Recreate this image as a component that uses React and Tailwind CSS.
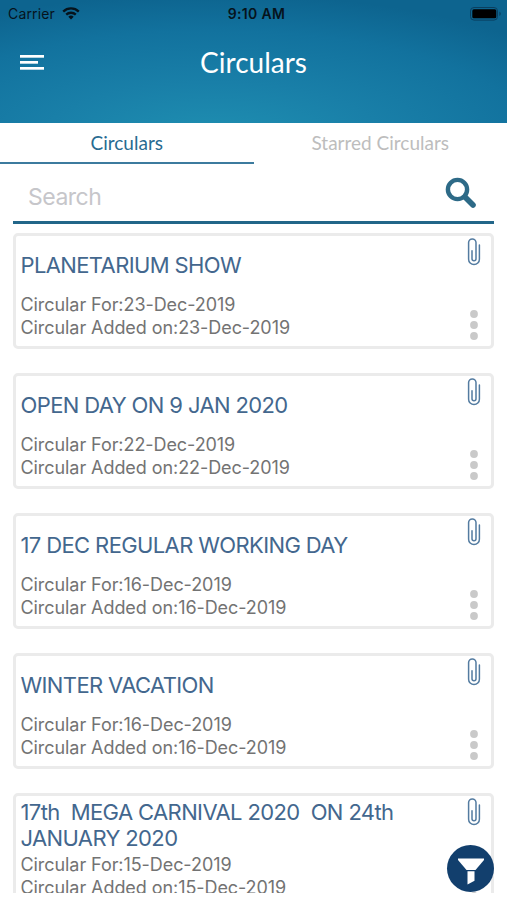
import React, { useState } from 'react';

const circulars = [
  { title: 'PLANETARIUM SHOW', date: '23-Dec-2019' },
  { title: 'OPEN DAY ON 9 JAN 2020', date: '22-Dec-2019' },
  { title: '17 DEC REGULAR WORKING DAY', date: '16-Dec-2019' },
  { title: 'WINTER VACATION', date: '16-Dec-2019' },
  { title: '17th  MEGA CARNIVAL 2020  ON 24th JANUARY 2020', date: '15-Dec-2019' },
];

function WifiIcon() {
  return (
    <svg width="18" height="13" viewBox="0 0 18 13" fill="none" stroke="#06131c" strokeWidth="2.3">
      <path d="M1.2 4.6a11.2 11.2 0 0 1 15.6 0" />
      <path d="M4.2 7.7a6.9 6.9 0 0 1 9.6 0" />
      <path d="M9 12.4 6.3 9.7a3.9 3.9 0 0 1 5.4 0z" fill="#06131c" stroke="none" />
    </svg>
  );
}

function BatteryIcon() {
  return (
    <svg width="32" height="14" viewBox="0 0 32 14">
      <rect x="0.5" y="0.5" width="27" height="12.6" rx="3.5" fill="none" stroke="#0a3f5f" />
      <rect x="2.3" y="2.3" width="24" height="9" rx="1.6" fill="#000" />
      <path d="M29.4 4.6v4.4c1.8-.8 1.8-3.6 0-4.4z" fill="#0a3f5f" />
    </svg>
  );
}

function ClipIcon() {
  return (
    <svg width="14" height="28" viewBox="0 0 14 28" fill="none" stroke="#537ba0" strokeWidth="1.5" strokeLinecap="round">
      <path d="M12.4 7v14.2a5.4 5.4 0 0 1-10.8 0V4.6a3.7 3.7 0 0 1 7.4 0v16.2a2 2 0 0 1-4 0V12.8" />
    </svg>
  );
}

function StatusBar() {
  return (
    <div className="grid grid-cols-3 items-center h-[27px] pl-2 pr-[5px] text-[#06131c]">
      <div className="flex items-center gap-[7px] text-[14px] tracking-[0.15px]">
        <span>Carrier</span>
        <WifiIcon />
      </div>
      <span className="pl-[3px] text-center text-[14px] font-semibold tracking-[0.35px]">9:10 AM</span>
      <div className="flex justify-end"><BatteryIcon /></div>
    </div>
  );
}

function CircularCard({ title, date }) {
  return (
    <div className="flex h-[116px] shrink-0 justify-between rounded-[5px] border-[3px] border-[#ebebeb] bg-white pl-[4.5px] pr-[10px]">
      <div className="text-[18px] leading-[23px] tracking-[-0.07px] text-[#737373]">
        <div className="flex h-[57px] items-center">
          <h2 className="w-[400px] whitespace-pre-wrap text-[22px] leading-[26px] tracking-[-0.62px] text-[#43678e]">
            {title}
          </h2>
        </div>
        <p>Circular For:{date}</p>
        <p>Circular Added on:{date}</p>
      </div>
      <div className="flex flex-col items-center justify-between pt-[2px] pb-[6.5px]">
        <ClipIcon />
        <svg width="8" height="30" viewBox="0 0 8 30" fill="#c9c9c9">
          <circle cx="4" cy="4" r="3.9" />
          <circle cx="4" cy="15" r="3.9" />
          <circle cx="4" cy="26" r="3.9" />
        </svg>
      </div>
    </div>
  );
}

export default function App() {
  const [search, setSearch] = useState('');

  return (
    <div className="relative flex h-[900px] w-[507px] flex-col overflow-hidden bg-white font-['Inter',sans-serif]">
      <header className="h-[123px] shrink-0 bg-[radial-gradient(ellipse_85%_120%_at_42%_115%,#1f90b2_0%,#197fa8_40%,#12729e_75%,#0d648f_100%)]">
        <StatusBar />
        <div className="grid grid-cols-3 items-center h-[70px] font-['Lato',sans-serif]">
          <button className="pl-5">
            <svg width="24" height="15" viewBox="0 0 24 15" fill="#fff">
              <rect width="24" height="2.7" />
              <rect y="6" width="18" height="2.7" />
              <rect y="12" width="24" height="2.7" />
            </svg>
          </button>
          <h1 className="text-center text-[28px] text-white">Circulars</h1>
        </div>
      </header>

      {/* Tabs */}
      <div className="grid h-[41px] w-full shrink-0 grid-cols-2 font-['Lato',sans-serif] text-[19px]">
        <button className="border-b-2 border-[#3c7b9e] pt-[2px] text-[#286b91]">Circulars</button>
        <button className="border-b-2 border-transparent pt-[2px] text-[#bdbdbd]">Starred Circulars</button>
      </div>

      {/* Search */}
      <div className="mx-[13px] flex h-[60px] shrink-0 items-center justify-between border-b-[3px] border-[#226689] pl-[15px] pr-[16px]">
        <input
          className="w-[300px] bg-transparent pt-[8px] text-[23px] leading-7 tracking-[-0.5px] text-[#737373] outline-none placeholder:text-[#c6c6ca]"
          placeholder="Search"
          value={search}
          onChange={(e) => setSearch(e.target.value)}
        />
        <svg className="mt-[2px]" width="33" height="33" viewBox="0 0 33 33" fill="none" stroke="#2d6a87" strokeLinecap="round">
          <circle cx="12.500" cy="12.500" r="9.600" strokeWidth="4.4" />
          <path d="m20.500 20.500 7.500 7.500" strokeWidth="5.6" />
        </svg>
      </div>

      <main className="flex h-[669px] shrink-0 flex-col gap-6 overflow-hidden px-[13px] pt-[9px]">
        {circulars.map((c) => (
          <CircularCard key={c.title} {...c} />
        ))}
      </main>

      <button className="absolute left-[447px] top-[845px] flex size-[47px] items-center justify-center rounded-full bg-[#123f6d] pt-[5px]">
        <svg width="26" height="27" viewBox="0 0 26 27" fill="#fff">
          <path d="M0 .5h26v1.600l-8.500 9.900h-9L0 2.100z" />
          <path d="M9.500 13.300h7v9.400l-7 3.800z" />
        </svg>
      </button>
    </div>
  );
}
